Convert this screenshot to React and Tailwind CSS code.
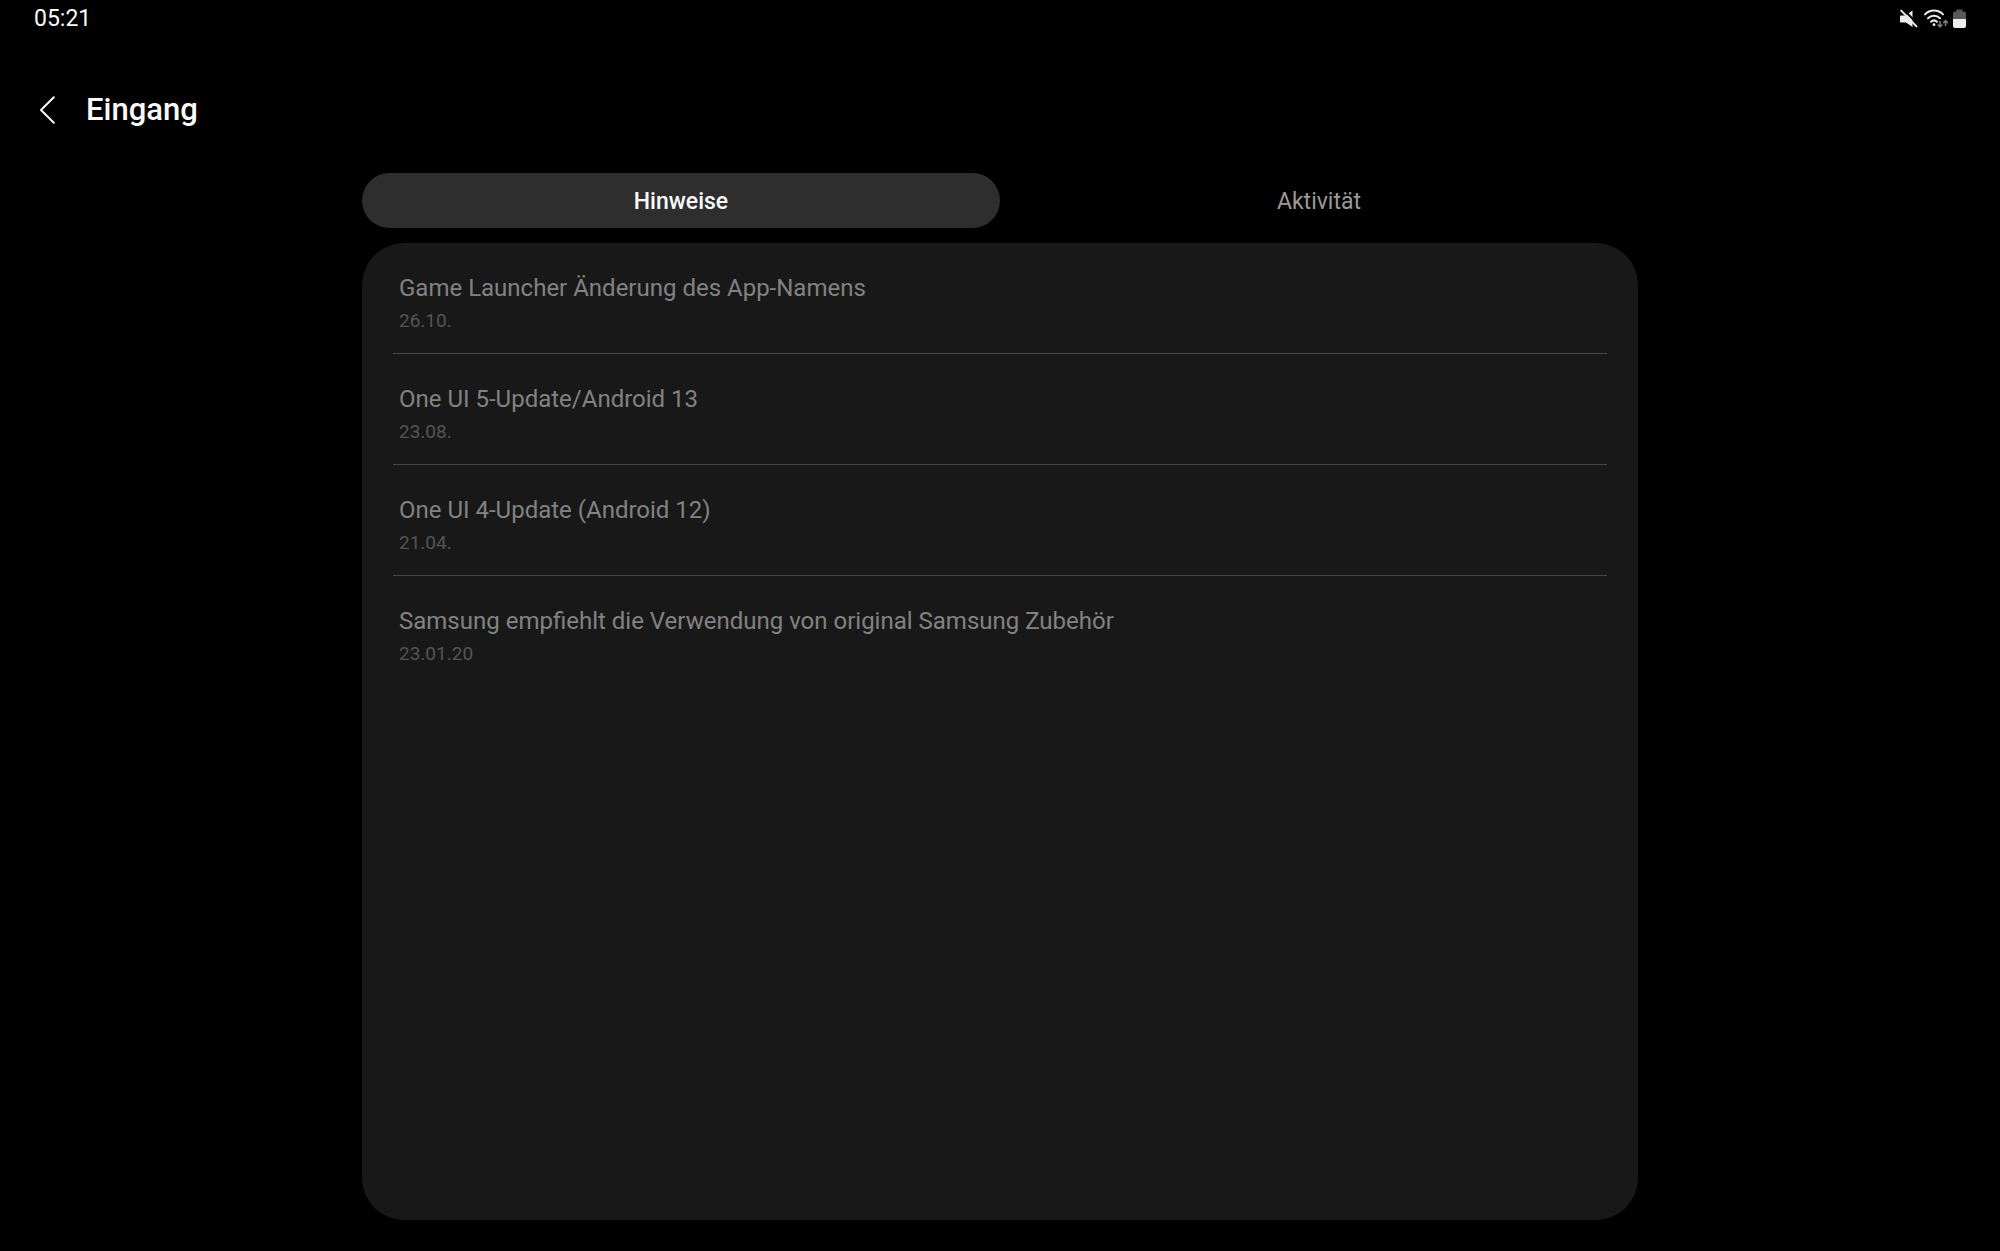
import React, { useState } from "react";

const hinweise = [
  { titre: "Game Launcher Änderung des App-Namens", date: "26.10." },
  { titre: "One UI 5-Update/Android 13", date: "23.08." },
  { titre: "One UI 4-Update (Android 12)", date: "21.04." },
  {
    titre: "Samsung empfiehlt die Verwendung von original Samsung Zubehör",
    date: "23.01.20",
  },
];

const tabs = ["Hinweise", "Aktivität"];

function StatusIcons() {
  return (
    <div className="flex items-center">
      <svg width="20" height="20" viewBox="0 0 20 20" aria-hidden="true">
        <path
          d="M2 6.500h4.500L13.500 1.500v16.500L7 13.500H2a1 1 0 0 1-1-1V7.500a1 1 0 0 1 1-1z"
          fill="#ececec"
        />
        <path d="M4 0L20 16.200" stroke="#000" strokeWidth="2" />
        <path
          d="M2.200 1.600L17.500 17.400"
          stroke="#ececec"
          strokeWidth="2"
          strokeLinecap="round"
        />
      </svg>
      <svg
        className="ml-1"
        width="26"
        height="20"
        viewBox="0 0 26 20"
        fill="none"
        aria-hidden="true"
      >
        <g stroke="#ececec" strokeWidth="2" strokeLinecap="round">
          <path d="M2 5.400a12.500 12.500 0 0 1 18 0" />
          <path d="M5 9.200a8.500 8.500 0 0 1 12 0" />
          <path d="M8 12.700a4.600 4.600 0 0 1 6 0" />
        </g>
        <circle cx="11" cy="15.700" r="1.400" fill="#ececec" />
        <g stroke="#808080" strokeWidth="1.500">
          <path d="M17 12v6M14.700 15.500l2.300 2.500 2.300-2.500" />
          <path d="M22.500 17V11.500M20.200 14l2.300-2.500 2.300 2.500" />
        </g>
      </svg>
      <svg
        className="ml-1"
        width="13"
        height="20"
        viewBox="0 0 13 20"
        aria-hidden="true"
      >
        <path
          d="M3.500 0.500h6v2H11a2 2 0 0 1 2 2V10H0V4.500a2 2 0 0 1 2-2h1.500z"
          fill="#585858"
        />
        <path d="M0 10h13v7a2 2 0 0 1-2 2H2a2 2 0 0 1-2-2z" fill="#ececec" />
      </svg>
    </div>
  );
}

function App() {
  const [activeTab, setActiveTab] = useState("Hinweise");

  return (
    <div className="min-h-screen bg-black text-[#fafafa] font-['Roboto',sans-serif] flex flex-col">
      <div className="flex items-center justify-between h-[38px] pl-[34px] pr-[34px] text-[23px]">
        <span>05:21</span>
        <StatusIcons />
      </div>

      <header className="flex items-center gap-7 mt-12 px-9">
        <button type="button" aria-label="Zurück" className="cursor-pointer">
          <svg width="22" height="30" viewBox="0 0 22 30" fill="none">
            <path
              d="M17.800 2.200L5 15l12.800 12.800"
              stroke="#fafafa"
              strokeWidth="2"
              strokeLinecap="round"
              strokeLinejoin="round"
            />
          </svg>
        </button>
        <h1 className="text-[31px] leading-12 font-medium">Eingang</h1>
      </header>

      <main className="flex flex-col flex-1 w-full max-w-[1276px] mx-auto mt-[39px] mb-[31px]">
        <div role="tablist" className="grid grid-cols-2">
          {tabs.map((tab) => (
            <button
              key={tab}
              type="button"
              role="tab"
              aria-selected={activeTab === tab}
              onClick={() => setActiveTab(tab)}
              className={`h-[55px] pt-1 rounded-full text-[23px] cursor-pointer ${
                activeTab === tab
                  ? "bg-[#2e2e2e] text-[#fafafa] font-medium"
                  : "text-[#999999]"
              }`}
            >
              {tab}
            </button>
          ))}
        </div>

        <section className="flex-1 mt-[15px] px-[31px] rounded-[42px] bg-[#181818]">
          {activeTab === "Hinweise" && (
            <ul className="divide-y divide-[#464646]">
              {hinweise.map((hinweis) => (
                <li key={hinweis.titre} className="px-1.5 pt-7 pb-5">
                  <h2 className="text-[24px] leading-[34px] text-[#828282]">
                    {hinweis.titre}
                  </h2>
                  <p className="mt-1 text-[19px] leading-6 text-[#545454]">
                    {hinweis.date}
                  </p>
                </li>
              ))}
            </ul>
          )}
        </section>
      </main>
    </div>
  );
}

export default App;
